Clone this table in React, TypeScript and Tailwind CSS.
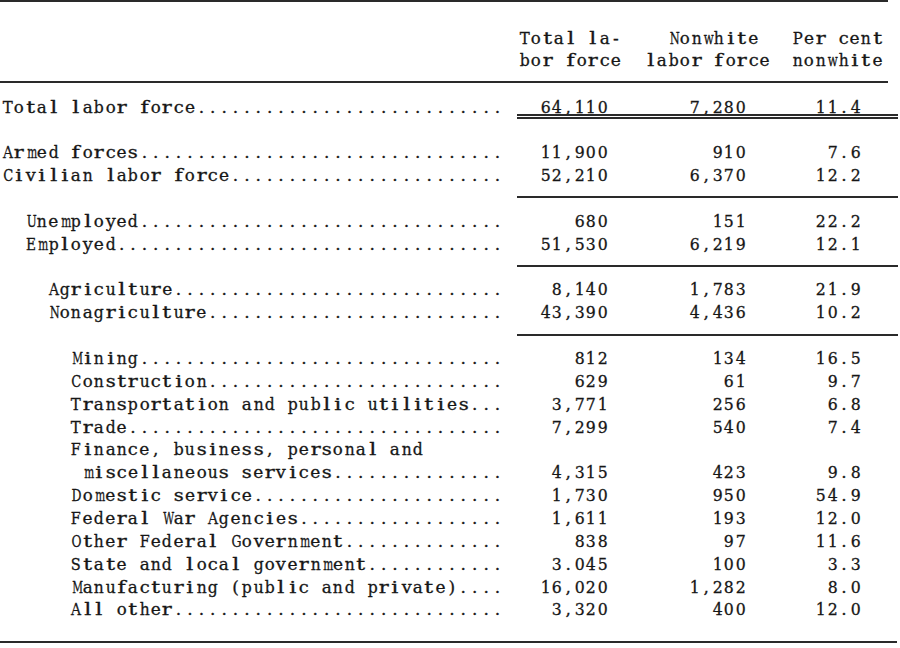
import React from "react";

type Row =
  | { kind: "data"; label: string; indent: number; vals?: string[]; dots?: boolean; total?: boolean }
  | { kind: "blank"; rule?: boolean };

const rows: Row[] = [
  { kind: "data", label: "Total labor force", indent: 0, vals: ["64,110", "7,280", "11.4"], total: true },
  { kind: "blank" },
  { kind: "data", label: "Armed forces", indent: 0, vals: ["11,900", "910", "7.6"] },
  { kind: "data", label: "Civilian labor force", indent: 0, vals: ["52,210", "6,370", "12.2"] },
  { kind: "blank", rule: true },
  { kind: "data", label: "Unemployed", indent: 2, vals: ["680", "151", "22.2"] },
  { kind: "data", label: "Employed", indent: 2, vals: ["51,530", "6,219", "12.1"] },
  { kind: "blank", rule: true },
  { kind: "data", label: "Agriculture", indent: 4, vals: ["8,140", "1,783", "21.9"] },
  { kind: "data", label: "Nonagriculture", indent: 4, vals: ["43,390", "4,436", "10.2"] },
  { kind: "blank", rule: true },
  { kind: "data", label: "Mining", indent: 6, vals: ["812", "134", "16.5"] },
  { kind: "data", label: "Construction", indent: 6, vals: ["629", "61", "9.7"] },
  { kind: "data", label: "Transportation and public utilities", indent: 6, vals: ["3,771", "256", "6.8"] },
  { kind: "data", label: "Trade", indent: 6, vals: ["7,299", "540", "7.4"] },
  { kind: "data", label: "Finance, business, personal and", indent: 6, dots: false },
  { kind: "data", label: "miscellaneous services", indent: 7, vals: ["4,315", "423", "9.8"] },
  { kind: "data", label: "Domestic service", indent: 6, vals: ["1,730", "950", "54.9"] },
  { kind: "data", label: "Federal War Agencies", indent: 6, vals: ["1,611", "193", "12.0"] },
  { kind: "data", label: "Other Federal Government", indent: 6, vals: ["838", "97", "11.6"] },
  { kind: "data", label: "State and local government", indent: 6, vals: ["3.045", "100", "3.3"] },
  { kind: "data", label: "Manufacturing (public and private)", indent: 6, vals: ["16,020", "1,282", "8.0"] },
  { kind: "data", label: "All other", indent: 6, vals: ["3,320", "400", "12.0"] },
];

const WIDTH = 44;

function labelText(label: string, indent: number, dots: boolean) {
  const base = " ".repeat(indent) + label;
  if (!dots) return base;
  return base + ".".repeat(Math.max(0, WIDTH - base.length));
}

let ctx: CanvasRenderingContext2D | null = null;
const cache: Record<string, number> = {};
function glyphScale(ch: string): number {
  if (!/[A-Za-z0-9]/.test(ch)) return 1;
  if (cache[ch] !== undefined) return cache[ch];
  if (!ctx && typeof document !== "undefined") {
    const c = document.createElement("canvas");
    ctx = c.getContext("2d");
    if (ctx) ctx.font = "17px 'DejaVu Serif'";
  }
  const w = ctx ? ctx.measureText(ch).width : 10;
  const s = Math.max(0.62, Math.min(1.3, 10 / w));
  cache[ch] = s;
  return s;
}

function Mono({ text }: { text: string }) {
  return (
    <span className="whitespace-pre">
      {Array.from(text).map((ch, i) => {
        const s = glyphScale(ch);
        return (
          <span
            key={i}
            className="inline-block w-[11.4px] text-center"
            style={Math.abs(s - 1) > 0.01 ? { transform: `scaleX(${s.toFixed(3)})` } : undefined}
          >
            {ch === " " ? "\u00a0" : ch}
          </span>
        );
      })}
    </span>
  );
}

function Numbers({ vals }: { vals: string[] }) {
  return (
    <div className="grid grid-cols-[91px_138px_115px_37px] h-[18.5px]">
      <div className="text-right"><Mono text={vals[0]} /></div>
      <div className="text-right"><Mono text={vals[1]} /></div>
      <div className="text-right"><Mono text={vals[2]} /></div>
      <div />
    </div>
  );
}

export default function App() {
  return (
    <div className="w-[900px] h-[648px] bg-white text-[#161616] font-['DejaVu_Serif',serif] text-[17px] [-webkit-text-stroke:0.3px_#161616] overflow-hidden">
      {/* top rule */}
      <div className="w-[888px] h-[2px] bg-[#2a2a2a]" />

      {/* header */}
      <div className="grid grid-cols-[517px_91px_138px_115px_37px] pt-[25px] leading-[22px]">
        <div />
        <div className="whitespace-nowrap pl-[2px] flex flex-col">
          <Mono text="Total la-" />
          <Mono text="bor force" />
        </div>
        <div className="whitespace-nowrap pl-[37px] flex flex-col">
          <Mono text="  Nonwhite" />
          <Mono text="labor force" />
        </div>
        <div className="whitespace-nowrap pl-[46px] flex flex-col">
          <Mono text="Per cent" />
          <Mono text="nonwhite" />
        </div>
        <div />
      </div>

      {/* header rule */}
      <div className="w-[888px] h-[2px] mt-[10px] bg-[#2a2a2a]" />

      {/* body */}
      <div className="pt-[12.5px] leading-[22.86px]">
        {rows.map((r, i) => {
          if (r.kind === "blank") {
            return (
              <div key={i} className="grid grid-cols-[517px_381px] h-[22.86px]">
                <div />
                {r.rule ? <div className="mt-[9.5px] h-[2px] bg-[#2a2a2a]" /> : <div />}
              </div>
            );
          }
          return (
            <div key={i} className="grid grid-cols-[517px_381px] h-[22.86px]">
              <div className="whitespace-nowrap pl-[2px]">
                <Mono text={labelText(r.label, r.indent, r.dots !== false)} />
              </div>
              {r.vals ? (
                r.total ? (
                  <div className="flex flex-col">
                    <Numbers vals={r.vals} />
                    <div className="h-[1.5px] bg-[#2a2a2a]" />
                    <div className="h-[1.5px]" />
                    <div className="h-[1.5px] bg-[#2a2a2a]" />
                  </div>
                ) : (
                  <Numbers vals={r.vals} />
                )
              ) : (
                <div />
              )}
            </div>
          );
        })}
      </div>

      {/* bottom rule */}
      <div className="w-[897px] h-[2px] mt-[20px] bg-[#2a2a2a]" />
    </div>
  );
}
